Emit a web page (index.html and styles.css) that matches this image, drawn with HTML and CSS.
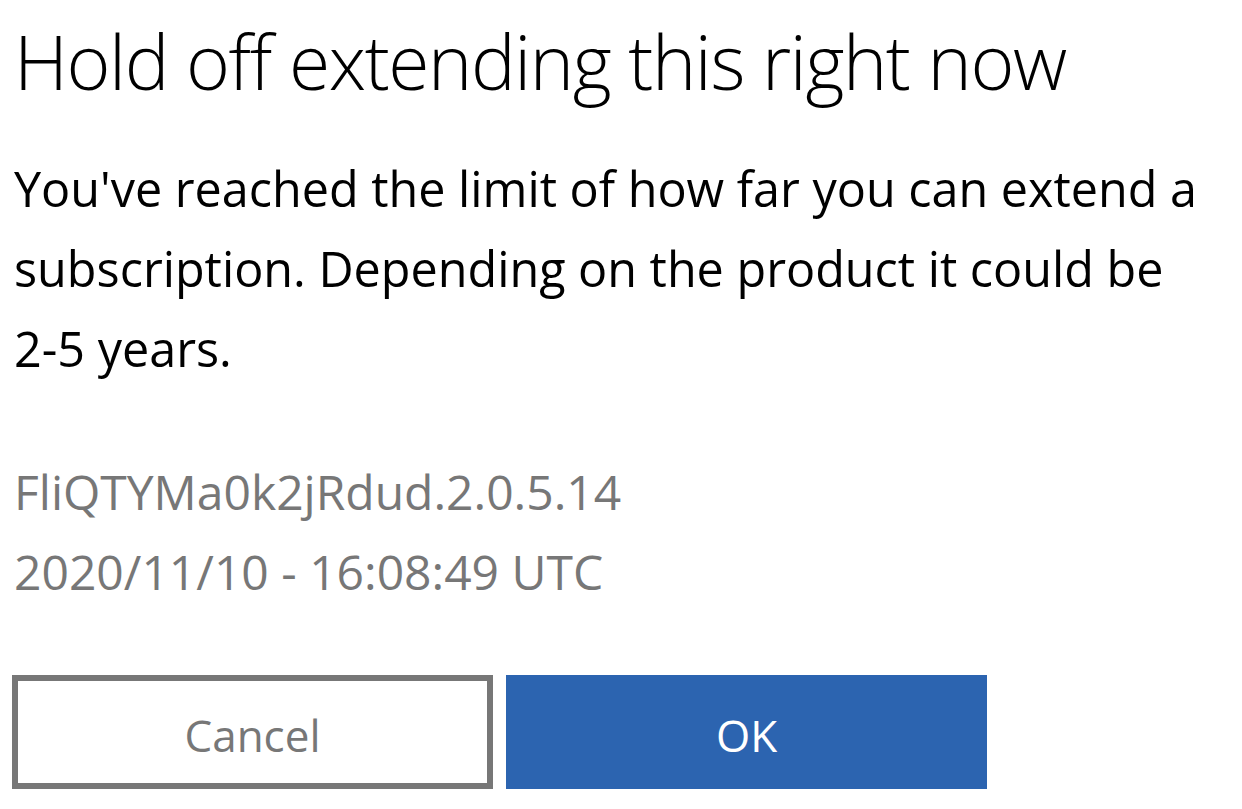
FILE: index.html
```html
<!DOCTYPE html>
<html lang="en">
<head>
<meta charset="utf-8">
<title>Hold off extending this right now</title>
<link rel="stylesheet" href="styles.css">
</head>
<body>
<main class="dialog">
  <h1 class="title">Hold off extending this right now</h1>
  <p class="message">You've reached the limit of how far you can extend a subscription. Depending on the product it could be <span class="nowrap">2-5 years.</span></p>
  <div class="meta">
    <div class="meta-line">FliQTYMa0k2jRdud.2.0.5.14</div>
    <div class="meta-line">2020/11/10 - 16:08:49 UTC</div>
  </div>
  <div class="actions">
    <button class="btn btn-secondary" type="button">Cancel</button>
    <button class="btn btn-primary" type="button">OK</button>
  </div>
</main>
</body>
</html>
```
FILE: styles.css
```css
html, body {
  margin: 0;
  padding: 0;
  background: #ffffff;
}
body {
  font-family: "Open Sans", "Noto Sans", "Liberation Sans", sans-serif;
  color: #000000;
}
.dialog {
  width: 1200px;
  padding: 0 0 0 14px;
}
.title {
  margin: 0;
  padding-top: 11px;
  font-weight: 300;
  font-size: 75px;
  line-height: 100px;
  letter-spacing: -1.4px;
}
.message {
  margin: 37px 0 0 0;
  font-size: 48.5px;
  line-height: 80px;
  font-weight: 400;
}
.nowrap {
  white-space: nowrap;
}
.meta {
  margin-top: 64px;
  color: #777777;
  font-size: 48px;
  line-height: 80px;
}
.actions {
  display: flex;
  gap: 13px;
  margin-top: 63px;
  margin-left: -2px;
}
.btn {
  width: 481px;
  height: 114px;
  font-family: inherit;
  font-size: 44px;
  box-sizing: border-box;
  padding: 6px 0 0 0;
  cursor: pointer;
}
.btn-secondary {
  background: #ffffff;
  border: 6px solid #777777;
  color: #777777;
}
.btn-primary {
  background: #2c64b0;
  border: 0;
  color: #ffffff;
}
```
